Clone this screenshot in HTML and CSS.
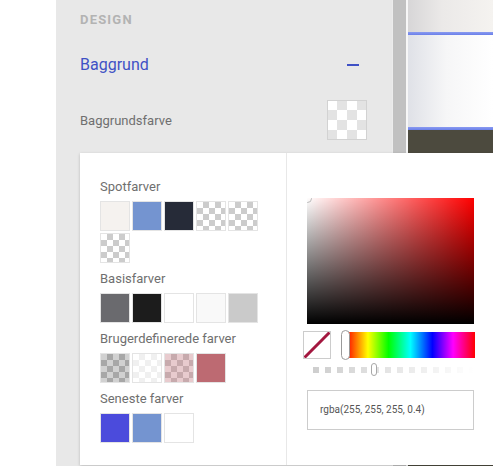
FILE: index.html
```html
<!DOCTYPE html>
<html lang="da">
<head>
<meta charset="utf-8">
<title>Design</title>
<link rel="stylesheet" href="styles.css">
</head>
<body>
<div class="app">
  <div class="gutter"></div>
  <aside class="panel">
    <div class="section-title">DESIGN</div>
    <div class="group-head">
      <span class="group-name">Baggrund</span>
      <span class="collapse"></span>
    </div>
    <div class="field">
      <span class="field-label">Baggrundsfarve</span>
      <span class="field-swatch"></span>
    </div>
  </aside>
  <div class="scrollbar"></div>
  <div class="gap"></div>
  <div class="preview">
    <div class="pv-top"></div>
    <div class="pv-line"></div>
    <div class="pv-mid"></div>
    <div class="pv-line"></div>
    <div class="pv-dark"></div>
  </div>

  <div class="popup">
    <div class="palettes">
      <div class="pal">
        <div class="pal-label">Spotfarver</div>
        <div class="swatches">
          <span class="sw" style="background:#f5f2ef"></span>
          <span class="sw" style="background:#7494d0"></span>
          <span class="sw" style="background:#262b38"></span>
          <span class="sw checker"></span>
          <span class="sw checker"></span>
          <span class="sw checker"></span>
        </div>
      </div>
      <div class="pal">
        <div class="pal-label">Basisfarver</div>
        <div class="swatches">
          <span class="sw" style="background:#6a6a6e"></span>
          <span class="sw" style="background:#1c1c1c"></span>
          <span class="sw" style="background:#ffffff"></span>
          <span class="sw" style="background:#f9f9f9"></span>
          <span class="sw" style="background:#cacaca"></span>
        </div>
      </div>
      <div class="pal">
        <div class="pal-label">Brugerdefinerede farver</div>
        <div class="swatches">
          <span class="sw checker"><i style="background:rgba(0,0,0,0.18)"></i></span>
          <span class="sw checker"><i style="background:rgba(255,255,255,0.7)"></i></span>
          <span class="sw checker"><i style="background:rgba(189,106,114,0.35)"></i></span>
          <span class="sw" style="background:#bd6a72"></span>
        </div>
      </div>
      <div class="pal">
        <div class="pal-label">Seneste farver</div>
        <div class="swatches">
          <span class="sw" style="background:#4b4bdc"></span>
          <span class="sw" style="background:#7494d0"></span>
          <span class="sw" style="background:#ffffff"></span>
        </div>
      </div>
    </div>
    <div class="picker">
      <div class="sv">
        <div class="sv-white"></div>
        <div class="sv-black"></div>
        <div class="sv-handle"></div>
      </div>
      <div class="hue-row">
        <div class="current">
          <svg width="28" height="28" viewBox="0 0 28 28"><line x1="1.5" y1="26.5" x2="26.5" y2="1.5" stroke="#a3173f" stroke-width="3"/></svg>
        </div>
        <div class="hue">
          <div class="hue-handle"></div>
        </div>
      </div>
      <div class="alpha">
        <div class="alpha-handle"></div>
      </div>
      <div class="value-input">rgba(255, 255, 255, 0.4)</div>
    </div>
  </div>
</div>
</body>
</html>
```
FILE: styles.css
```css
*, *::before, *::after {
  box-sizing: border-box;
}
html, body {
  margin: 0;
  padding: 0;
  background: #ffffff;
  font-family: Roboto, "Liberation Sans", sans-serif;
}
.app {
  position: relative;
  display: flex;
  width: 493px;
  height: 466px;
  overflow: hidden;
}
.gutter {
  width: 56px;
  flex: none;
  background: #ffffff;
}
.panel {
  width: 337px;
  flex: none;
  background: #e8e8e8;
  padding: 12px 25px 0 24px;
  border-right: 1px solid #ececec;
}
.section-title {
  font-size: 13px;
  line-height: 16px;
  font-weight: 700;
  letter-spacing: 1.2px;
  color: #b3b3b3;
}
.group-head {
  margin-top: 26px;
  height: 21px;
  display: flex;
  align-items: center;
  justify-content: space-between;
}
.group-name {
  font-size: 16px;
  line-height: 21px;
  color: #3f51c5;
}
.collapse {
  width: 12px;
  height: 2px;
  background: #3f51c5;
  margin-right: 8px;
  margin-top: 1px;
}
.field {
  margin-top: 25px;
  display: flex;
  align-items: center;
  justify-content: space-between;
}
.field-label {
  font-size: 13px;
  color: #6f6f6f;
  padding-top: 1px;
}
.field-swatch {
  width: 40px;
  height: 40px;
  border: 1px solid #d2d2d2;
  background-color: #ffffff;
  background-image: conic-gradient(#e3e3e3 25%, #ffffff 0 50%, #e3e3e3 0 75%, #ffffff 0);
  background-size: 20px 20px;
  background-position: -1px -1px;
}
.scrollbar {
  width: 13px;
  flex: none;
  background: #c1c1c1;
}
.gap {
  width: 2px;
  flex: none;
  background: #f7f7f7;
}
.preview {
  flex: 1;
  display: flex;
  flex-direction: column;
}
.pv-top {
  height: 32px;
  background: linear-gradient(to right, #d7d6d7, #ebe9e8 40%, #f5f3f0);
}
.pv-line {
  height: 3px;
  background: linear-gradient(#8a9bf0, #6a7fe9);
}
.pv-mid {
  height: 92px;
  background: linear-gradient(to right, #dfe1e7, #f6f6f7 45%, #ffffff);
}
.pv-dark {
  flex: 1;
  background: #4c4a3e;
}

/* popup */
.popup {
  position: absolute;
  left: 80px;
  top: 153px;
  width: 414px;
  height: 312px;
  background: #ffffff;
  box-shadow: 0 1px 3px rgba(0, 0, 0, 0.2);
  display: flex;
}
.palettes {
  width: 207px;
  flex: none;
  padding: 26px 20px 0 20px;
  border-right: 1px solid #e8e8e8;
}
.pal + .pal {
  margin-top: 8px;
}
.pal-label {
  font-size: 13px;
  line-height: 16px;
  color: #6f6f6f;
  margin-bottom: 6px;
}
.swatches {
  display: flex;
  flex-wrap: wrap;
  gap: 2px;
}
.sw {
  position: relative;
  width: 30px;
  height: 30px;
  border: 1px solid #e4e4e4;
}
.sw i {
  position: absolute;
  inset: 0;
}
.checker {
  background-color: #ffffff;
  background-image: conic-gradient(#cccccc 25%, #ffffff 0 50%, #cccccc 0 75%, #ffffff 0);
  background-size: 12px 12px;
}

.picker {
  flex: 1;
  padding: 45px 19px 0 20px;
}
.sv {
  position: relative;
  width: 167px;
  height: 126px;
  background: #ff0000;
  overflow: hidden;
}
.sv-white {
  position: absolute;
  inset: 0;
  background: linear-gradient(to right, #ffffff, rgba(255, 255, 255, 0));
}
.sv-black {
  position: absolute;
  inset: 0;
  background: linear-gradient(to bottom, rgba(0, 0, 0, 0), #000000);
}
.sv-handle {
  position: absolute;
  left: -4px;
  top: -4px;
  width: 9px;
  height: 9px;
  border: 1px solid #bbbbbb;
  border-radius: 50%;
}
.hue-row {
  margin: 6px 0 0 -4px;
  display: flex;
  align-items: center;
  height: 30px;
}
.current {
  width: 28px;
  height: 28px;
  flex: none;
  border: 1px solid #cccccc;
  background: #ffffff;
  overflow: hidden;
}
.current svg {
  display: block;
  margin: -1px;
}
.hue {
  position: relative;
  margin-left: 15px;
  flex: 1;
  height: 26px;
  background: linear-gradient(to right, #ff0000, #ffff00 17%, #00ff00 33%, #00ffff 50%, #0000ff 67%, #ff00ff 83%, #ff0000);
}
.hue-handle {
  position: absolute;
  left: -5px;
  top: -2px;
  width: 9px;
  height: 30px;
  border: 1.5px solid #9a9a9a;
  border-radius: 5px;
  background: #ffffff;
}
.alpha {
  position: relative;
  margin-top: 7px;
  width: 167px;
  height: 6px;
  background-image:
    linear-gradient(to right, rgba(255, 255, 255, 0), #ffffff),
    conic-gradient(#cccccc 25%, #ffffff 0 50%, #cccccc 0 75%, #ffffff 0);
  background-size: 100% 100%, 12px 12px;
}
.alpha-handle {
  position: absolute;
  left: 64px;
  top: -4px;
  width: 6px;
  height: 13px;
  border: 1px solid #a8a8a8;
  border-radius: 3px;
  background: #ffffff;
}
.value-input {
  margin-top: 17px;
  width: 167px;
  height: 40px;
  border: 1px solid #cccccc;
  padding-left: 12px;
  font-size: 10px;
  line-height: 38px;
  color: #555555;
}
```
